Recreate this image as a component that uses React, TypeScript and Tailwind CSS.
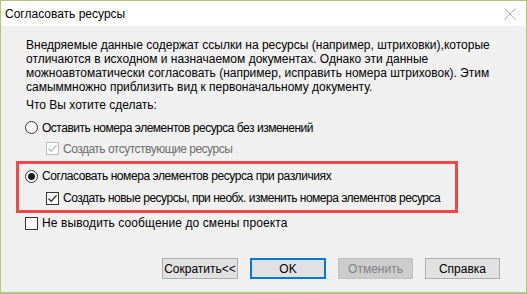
import { useState } from 'react';

const font = { fontFamily: '"Liberation Sans", Arial, sans-serif' };

function Radio({ checked }: { checked: boolean }) {
  return (
    <span className="w-[13px] h-[13px] rounded-full border border-[#333333] bg-white flex items-center justify-center shrink-0">
      {checked && <span className="w-[7px] h-[7px] rounded-full bg-[#1a1a1a]" />}
    </span>
  );
}

function Checkbox({ checked, disabled }: { checked: boolean; disabled?: boolean }) {
  return (
    <span
      className={
        disabled
          ? 'w-[13px] h-[13px] border border-[#bcbcbc] bg-white flex items-center justify-center shrink-0'
          : 'w-[13px] h-[13px] border border-[#333333] bg-white flex items-center justify-center shrink-0'
      }
    >
      {checked && (
        <svg width="11" height="11" viewBox="0 0 11 11">
          <path d="M1.5 5.5 L4.2 8.3 L9.6 2.2" fill="none" stroke={disabled ? '#bcbcbc' : '#333333'} strokeWidth="1.3" />
        </svg>
      )}
    </span>
  );
}

export default function App() {
  const [mode, setMode] = useState<'keep' | 'match'>('match');
  const [createNew, setCreateNew] = useState(true);
  const [noMessage, setNoMessage] = useState(false);

  return (
    <div className="w-[527px] h-[294px] flex flex-col bg-[#f0f0f0] border border-b-2 border-[#b7c47c] text-[12px] text-black whitespace-nowrap" style={font}>
      <div className="h-[25px] bg-white flex items-center justify-between pl-[4px] pr-[10px] shrink-0">
        <span className="leading-none">Согласовать ресурсы</span>
        <svg width="12" height="12" viewBox="0 0 12 12">
          <path d="M0.5 0.5 L11.5 11.5 M11.5 0.5 L0.5 11.5" stroke="#b4b4b4" strokeWidth="1" />
        </svg>
      </div>

      <div className="flex flex-col pl-[15px] pt-[12px]">
        <div className="pl-[10px] leading-[14px]">
          <div>Внедряемые данные содержат ссылки на ресурсы (например, штриховки),которые</div>
          <div>отличаются в исходном и назначаемом документах. Однако эти данные</div>
          <div>можноавтоматически согласовать (например, исправить номера штриховок). Этим</div>
          <div>самыммножно приблизить вид к первоначальному документу.</div>
        </div>

        <div className="pl-[10px] mt-[4px] leading-[14px]">Что Вы хотите сделать:</div>

        <div className="h-[21px] mt-[5px] flex items-center gap-[4px] pl-[9px] cursor-default" onClick={() => setMode('keep')}>
          <Radio checked={mode === 'keep'} />
          <span className="tracking-[-0.48px]">Оставить номера элементов ресурса без изменений</span>
        </div>
        <div className="h-[21px] flex items-center gap-[4px] pl-[30px] text-[#6d6d6d]">
          <Checkbox checked disabled />
          <span className="tracking-[-0.5px]">Создать отсутствующие ресурсы</span>
        </div>

        <div className="w-[442px] h-[52px] mt-[2px] border-[3px] border-[#f04848] flex flex-col pl-[6px] pt-[1px]">
          <div className="h-[22px] flex items-center gap-[4px] cursor-default" onClick={() => setMode('match')}>
            <Radio checked={mode === 'match'} />
            <span className="tracking-[-0.42px]">Согласовать номера элементов ресурса при различиях</span>
          </div>
          <div className="h-[22px] flex items-center gap-[4px] pl-[21px] cursor-default" onClick={() => setCreateNew(!createNew)}>
            <Checkbox checked={createNew} />
            <span className="tracking-[-0.5px]">Создать новые ресурсы, при необх. изменить номера элементов ресурса</span>
          </div>
        </div>

        <div className="h-[20px] flex items-center gap-[4px] pl-[9px] cursor-default" onClick={() => setNoMessage(!noMessage)}>
          <Checkbox checked={noMessage} />
          <span className="tracking-[0.1px]">Не выводить сообщение до смены проекта</span>
        </div>
      </div>

      <div className="flex justify-end gap-[12px] pr-[26px] mt-auto mb-[13px]">
        <button className="w-[76px] h-[21px] bg-[#e1e1e1] border border-[#adadad] leading-none">Сократить&lt;&lt;</button>
        <button className="w-[76px] h-[21px] bg-[#e1e1e1] border-2 border-[#0078d7] leading-none">OK</button>
        <button className="w-[75px] h-[21px] bg-[#cccccc] border border-[#bfbfbf] text-[#838383] leading-none" disabled>
          Отменить
        </button>
        <button className="w-[75px] h-[21px] bg-[#e1e1e1] border border-[#adadad] leading-none">Справка</button>
      </div>
    </div>
  );
}
